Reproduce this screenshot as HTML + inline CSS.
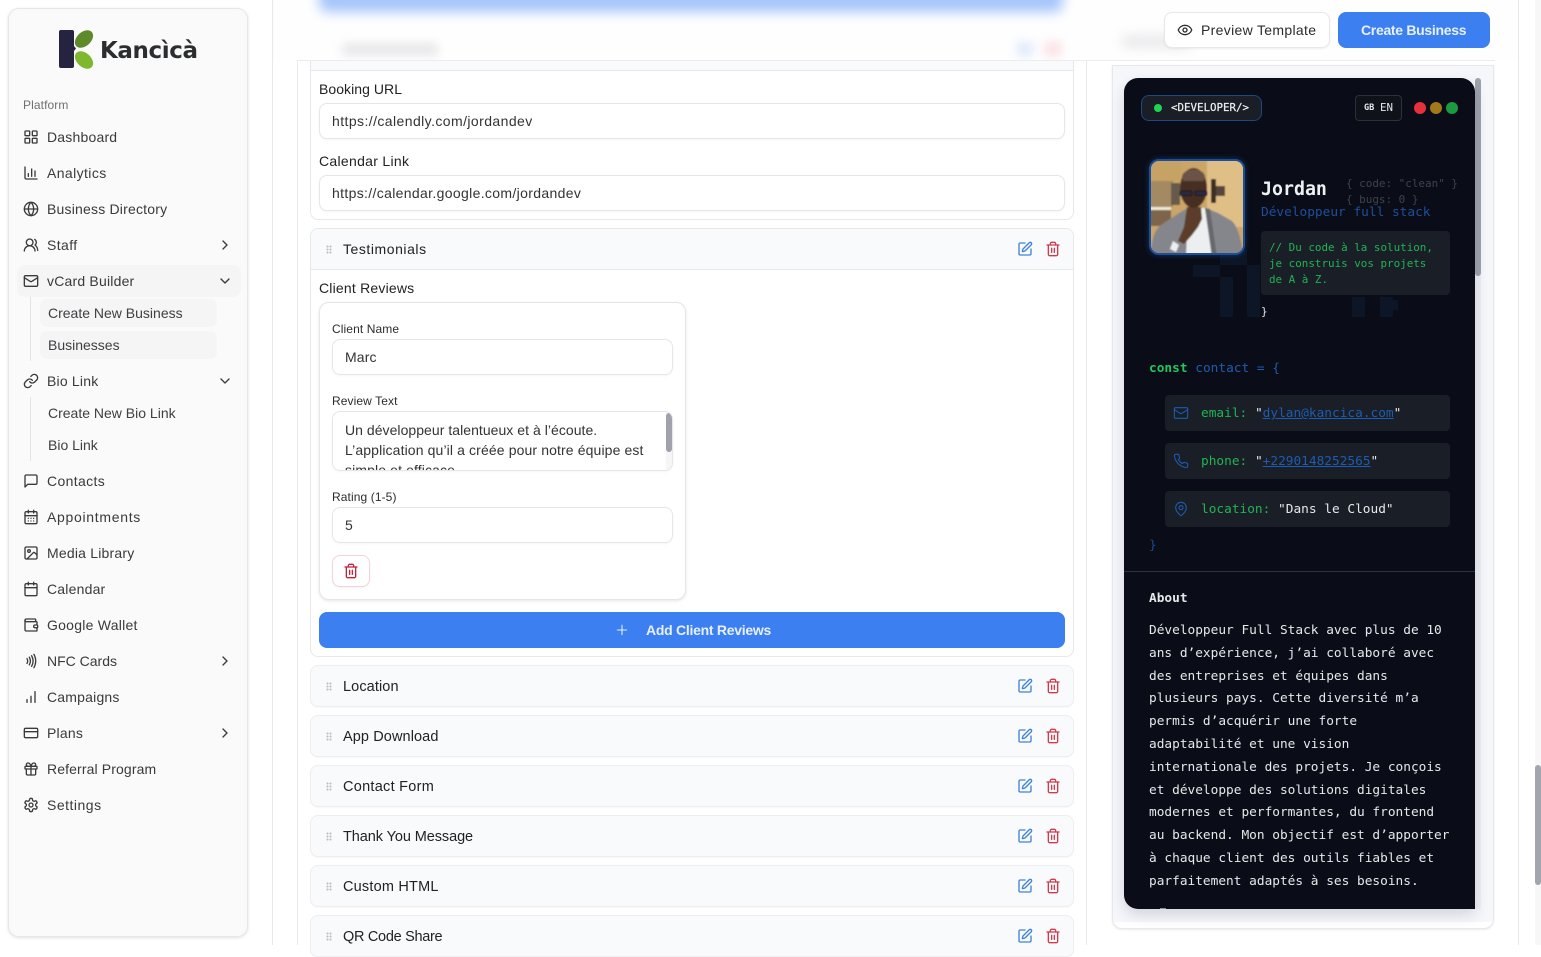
<!DOCTYPE html>
<html lang="en"><head><meta charset="utf-8"><title>Kancìcà - vCard Builder</title>
<style>
*{box-sizing:border-box}
html,body{margin:0;padding:0;width:1541px;height:945px;overflow:hidden;background:#fff;font-family:"Liberation Sans",sans-serif;color:#2c2c2e}
.a{position:absolute}
.t{position:absolute;white-space:nowrap;line-height:20px;height:20px}
.n{font-size:14px;color:#3a3a3c;left:47px;letter-spacing:.2px}
.s{font-size:14px;color:#3f3f42;left:48px;letter-spacing:0}
svg.i{position:absolute;fill:none;stroke:currentColor;stroke-width:2;stroke-linecap:round;stroke-linejoin:round}
.nv{color:#3a3a3c}
.l{font-size:14px;color:#222;letter-spacing:.12px}
.ls{font-size:12px;color:#2c2c2e;letter-spacing:.1px}
.inp{position:absolute;background:#fff;border:1px solid #e6e6e8;border-radius:8px;box-shadow:0 1px 2px rgba(0,0,0,.04)}
.v{font-size:14px;color:#333;letter-spacing:.12px}
.row{position:absolute;left:310px;width:764px;height:42px;background:#f9fafb;border:1px solid #eeeef0;border-radius:8px;box-shadow:0 1px 1px rgba(0,0,0,.03)}
.rt{font-size:14.5px;color:#222;left:343px;letter-spacing:.1px}
.m{font-family:"DejaVu Sans Mono","Liberation Mono",monospace}
.grip{position:absolute;width:6px;height:9px;left:326px;background-image:radial-gradient(circle,#bcbec2 1px,transparent 1.1px);background-size:3px 3px}
.cl{position:absolute;left:25px;font-size:12.8px;line-height:22.8px;color:#e6e8ea;white-space:nowrap}
.box{position:absolute;left:41px;width:285px;height:36px;background:#1a1e27;border-radius:4px}
.blue{color:#1d5cb0}
.gr{color:#1fb552}
</style></head><body>
<svg width="0" height="0" style="position:absolute"><defs>
<symbol id="edit" viewBox="0 0 24 24"><path d="M12 3H5a2 2 0 0 0-2 2v14a2 2 0 0 0 2 2h14a2 2 0 0 0 2-2v-7"/><path d="M18.375 2.625a1 1 0 0 1 3 3l-9.013 9.014a2 2 0 0 1-.853.505l-2.873.84a.5.5 0 0 1-.62-.62l.84-2.873a2 2 0 0 1 .506-.852z"/></symbol>
<symbol id="trash" viewBox="0 0 24 24"><path d="M3 6h18"/><path d="M19 6v14c0 1-1 2-2 2H7c-1 0-2-1-2-2V6"/><path d="M8 6V4c0-1 1-2 2-2h4c1 0 2 1 2 2v2"/><path d="M10 11v6"/><path d="M14 11v6"/></symbol>
<symbol id="mail" viewBox="0 0 24 24"><rect x="2" y="4" width="20" height="16" rx="2"/><path d="m22 7-8.97 5.7a1.94 1.94 0 0 1-2.06 0L2 7"/></symbol>
<symbol id="right" viewBox="0 0 24 24"><path d="m9 18 6-6-6-6"/></symbol>
<symbol id="down" viewBox="0 0 24 24"><path d="m6 9 6 6 6-6"/></symbol>
</defs></svg>

<!-- page rules -->
<div class="a" style="left:272px;top:0;width:1px;height:945px;background:#e8e8ea"></div>
<div class="a" style="left:1518px;top:0;width:1px;height:945px;background:#e8e8ea"></div>
<div class="a" style="left:1535px;top:0;width:6px;height:945px;background:#f7f7f8"></div>
<div class="a" style="left:1535px;top:765px;width:6px;height:120px;background:#a2a4ae;border-radius:3px"></div>

<!-- sidebar -->
<div class="a" style="left:8px;top:8px;width:240px;height:929px;background:#fafafa;border:1px solid #e7e7e7;border-radius:11px;box-shadow:0 1px 3px rgba(0,0,0,.12)"></div>
<svg class="a" style="left:58px;top:29px" width="37" height="40" viewBox="58 29 37 40">
<path d="M61 30h11a2 2 0 0 1 2 2v14l2 2.500-2 2.500v15a2 2 0 0 1-2 2H61a2 2 0 0 1-2-2V32a2 2 0 0 1 2-2z" fill="#25233f"/>
<ellipse cx="84" cy="39" rx="10.500" ry="7" transform="rotate(-42 84 39)" fill="#5f8a2a"/>
<ellipse cx="84" cy="60" rx="10.500" ry="7" transform="rotate(42 84 60)" fill="#7fb82e"/>
</svg>
<div class="t" style="left:100px;top:38.500px;height:24px;line-height:24px;font-family:'DejaVu Sans',sans-serif;font-size:23px;font-weight:bold;color:#2b2d2f;letter-spacing:-.4px">Kancìcà</div>
<div class="t" style="left:23px;top:95px;font-size:12px;color:#6f6f73;letter-spacing:.1px">Platform</div>

<div class="a" style="left:17px;top:265px;width:224px;height:32px;background:#f5f5f6;border-radius:8px"></div>
<div class="a" style="left:30px;top:297px;width:1px;height:64px;background:#e4e4e6"></div>
<div class="a" style="left:40px;top:299px;width:177px;height:28px;background:#f5f5f6;border-radius:7px"></div>
<div class="a" style="left:40px;top:331px;width:177px;height:28px;background:#f5f5f6;border-radius:7px"></div>
<div class="a" style="left:30px;top:397px;width:1px;height:64px;background:#e4e4e6"></div>

<div class="t n" style="top:127px">Dashboard</div>
<div class="t n" style="top:163px;letter-spacing:.4px">Analytics</div>
<div class="t n" style="top:199px">Business Directory</div>
<div class="t n" style="top:235px;letter-spacing:.4px">Staff</div>
<div class="t n" style="top:271px">vCard Builder</div>
<div class="t s" style="top:303px">Create New Business</div>
<div class="t s" style="top:335px">Businesses</div>
<div class="t n" style="top:371px">Bio Link</div>
<div class="t s" style="top:403px">Create New Bio Link</div>
<div class="t s" style="top:435px">Bio Link</div>
<div class="t n" style="top:471px;letter-spacing:.35px">Contacts</div>
<div class="t n" style="top:507px;letter-spacing:.7px">Appointments</div>
<div class="t n" style="top:543px">Media Library</div>
<div class="t n" style="top:579px">Calendar</div>
<div class="t n" style="top:615px;letter-spacing:.25px">Google Wallet</div>
<div class="t n" style="top:651px;letter-spacing:0">NFC Cards</div>
<div class="t n" style="top:687px">Campaigns</div>
<div class="t n" style="top:723px">Plans</div>
<div class="t n" style="top:759px;letter-spacing:.12px">Referral Program</div>
<div class="t n" style="top:795px;letter-spacing:.5px">Settings</div>

<svg class="i nv" style="left:23px;top:129px" width="16" height="16" viewBox="0 0 24 24"><rect x="3" y="3" width="7" height="7" rx="1"/><rect x="14" y="3" width="7" height="7" rx="1"/><rect x="14" y="14" width="7" height="7" rx="1"/><rect x="3" y="14" width="7" height="7" rx="1"/></svg>
<svg class="i nv" style="left:23px;top:165px" width="16" height="16" viewBox="0 0 24 24"><path d="M3 3v16a2 2 0 0 0 2 2h16"/><path d="M8 17v-4"/><path d="M13 17V6"/><path d="M18 17V9"/></svg>
<svg class="i nv" style="left:23px;top:201px" width="16" height="16" viewBox="0 0 24 24"><circle cx="12" cy="12" r="10"/><path d="M12 2a14.5 14.5 0 0 0 0 20 14.5 14.5 0 0 0 0-20"/><path d="M2 12h20"/></svg>
<svg class="i nv" style="left:23px;top:237px" width="16" height="16" viewBox="0 0 24 24"><path d="M18 21a8 8 0 0 0-16 0"/><circle cx="10" cy="8" r="5"/><path d="M22 20c0-3.37-2-6.5-4-8a5 5 0 0 0-.45-8.3"/></svg>
<svg class="i nv" style="left:23px;top:273px" width="16" height="16"><use href="#mail"/></svg>
<svg class="i nv" style="left:23px;top:373px" width="16" height="16" viewBox="0 0 24 24"><path d="M10 13a5 5 0 0 0 7.54.54l3-3a5 5 0 0 0-7.07-7.07l-1.72 1.71"/><path d="M14 11a5 5 0 0 0-7.54-.54l-3 3a5 5 0 0 0 7.07 7.07l1.71-1.71"/></svg>
<svg class="i nv" style="left:23px;top:473px" width="16" height="16" viewBox="0 0 24 24"><path d="M21 15a2 2 0 0 1-2 2H7l-4 4V5a2 2 0 0 1 2-2h14a2 2 0 0 1 2 2z"/></svg>
<svg class="i nv" style="left:23px;top:509px" width="16" height="16" viewBox="0 0 24 24"><path d="M8 2v4"/><path d="M16 2v4"/><rect x="3" y="4" width="18" height="18" rx="2"/><path d="M3 10h18"/><path d="M8 14h.01M12 14h.01M16 14h.01M8 18h.01M12 18h.01M16 18h.01"/></svg>
<svg class="i nv" style="left:23px;top:545px" width="16" height="16" viewBox="0 0 24 24"><rect x="3" y="3" width="18" height="18" rx="2"/><circle cx="9" cy="9" r="2"/><path d="m21 15-3.086-3.086a2 2 0 0 0-2.828 0L6 21"/></svg>
<svg class="i nv" style="left:23px;top:581px" width="16" height="16" viewBox="0 0 24 24"><path d="M8 2v4"/><path d="M16 2v4"/><rect x="3" y="4" width="18" height="18" rx="2"/><path d="M3 10h18"/></svg>
<svg class="i nv" style="left:23px;top:617px" width="16" height="16" viewBox="0 0 24 24"><path d="M19 7V4a1 1 0 0 0-1-1H5a2 2 0 0 0 0 4h15a1 1 0 0 1 1 1v4h-3a2 2 0 0 0 0 4h3a1 1 0 0 0 1-1v-2a1 1 0 0 0-1-1"/><path d="M3 5v14a2 2 0 0 0 2 2h15a1 1 0 0 0 1-1v-4"/></svg>
<svg class="i nv" style="left:23px;top:653px" width="16" height="16" viewBox="0 0 24 24"><path d="M6 8.32a7.43 7.43 0 0 1 0 7.36"/><path d="M9.46 6.21a11.76 11.76 0 0 1 0 11.58"/><path d="M12.91 4.1a15.91 15.91 0 0 1 .01 15.8"/><path d="M16.37 2a20.16 20.16 0 0 1 0 20"/></svg>
<svg class="i nv" style="left:23px;top:689px" width="16" height="16" viewBox="0 0 24 24"><path d="M6 20v-4"/><path d="M12 20v-9"/><path d="M18 20V4"/></svg>
<svg class="i nv" style="left:23px;top:725px" width="16" height="16" viewBox="0 0 24 24"><rect x="2" y="5" width="20" height="14" rx="2"/><path d="M2 10h20"/></svg>
<svg class="i nv" style="left:23px;top:761px" width="16" height="16" viewBox="0 0 24 24"><rect x="3" y="8" width="18" height="4" rx="1"/><path d="M12 8v13"/><path d="M19 12v7a2 2 0 0 1-2 2H7a2 2 0 0 1-2-2v-7"/><path d="M7.5 8a2.5 2.5 0 0 1 0-5A4.8 8 0 0 1 12 8a4.8 8 0 0 1 4.5-5 2.5 2.5 0 0 1 0 5"/></svg>
<svg class="i nv" style="left:23px;top:797px" width="16" height="16" viewBox="0 0 24 24"><path d="M12.22 2h-.44a2 2 0 0 0-2 2v.18a2 2 0 0 1-1 1.73l-.43.25a2 2 0 0 1-2 0l-.15-.08a2 2 0 0 0-2.73.73l-.22.38a2 2 0 0 0 .73 2.73l.15.1a2 2 0 0 1 1 1.72v.51a2 2 0 0 1-1 1.74l-.15.09a2 2 0 0 0-.73 2.73l.22.38a2 2 0 0 0 2.73.73l.15-.08a2 2 0 0 1 2 0l.43.25a2 2 0 0 1 1 1.73V20a2 2 0 0 0 2 2h.44a2 2 0 0 0 2-2v-.18a2 2 0 0 1 1-1.73l.43-.25a2 2 0 0 1 2 0l.15.08a2 2 0 0 0 2.73-.73l.22-.39a2 2 0 0 0-.73-2.73l-.15-.08a2 2 0 0 1-1-1.74v-.5a2 2 0 0 1 1-1.74l.15-.09a2 2 0 0 0 .73-2.73l-.22-.38a2 2 0 0 0-2.73-.73l-.15.08a2 2 0 0 1-2 0l-.43-.25a2 2 0 0 1-1-1.73V4a2 2 0 0 0-2-2z"/><circle cx="12" cy="12" r="3"/></svg>
<svg class="i nv" style="left:217px;top:237px" width="16" height="16"><use href="#right"/></svg>
<svg class="i nv" style="left:217px;top:273px" width="16" height="16"><use href="#down"/></svg>
<svg class="i nv" style="left:217px;top:373px" width="16" height="16"><use href="#down"/></svg>
<svg class="i nv" style="left:217px;top:653px" width="16" height="16"><use href="#right"/></svg>
<svg class="i nv" style="left:217px;top:725px" width="16" height="16"><use href="#right"/></svg>

<!-- editor panel -->
<div class="a" style="left:297px;top:60px;width:790px;height:885px;border-left:1px solid #eaeaec;border-right:1px solid #eaeaec"></div>

<!-- booking card -->
<div class="a" style="left:310px;top:60px;width:764px;height:160px;background:#fff;border:1px solid #e8e8ea;border-top:0;border-radius:0 0 8px 8px"></div>
<div class="a" style="left:311px;top:60px;width:762px;height:11px;background:#f8fafc;border-bottom:1px solid #e8e8ea"></div>
<div class="t l" style="left:319px;top:79px;letter-spacing:.05px">Booking URL</div>
<div class="inp" style="left:319px;top:103px;width:746px;height:36px"></div>
<div class="t v" style="left:332px;top:111px;letter-spacing:.42px">https://calendly.com/jordandev</div>
<div class="t l" style="left:319px;top:151px;letter-spacing:.3px">Calendar Link</div>
<div class="inp" style="left:319px;top:175px;width:746px;height:36px"></div>
<div class="t v" style="left:332px;top:183px;letter-spacing:.34px">https://calendar.google.com/jordandev</div>

<!-- testimonials card -->
<div class="a" style="left:310px;top:228px;width:764px;height:429px;background:#fff;border:1px solid #e8e8ea;border-radius:8px"></div>
<div class="a" style="left:311px;top:229px;width:762px;height:41px;background:#f8fafc;border-bottom:1px solid #e8e8ea;border-radius:7px 7px 0 0"></div>
<div class="grip" style="top:245px"></div>
<div class="t rt" style="top:239px;font-size:14px;letter-spacing:.55px">Testimonials</div>
<svg class="i" style="left:1017px;top:241px;color:#3f83d8" width="16" height="16"><use href="#edit"/></svg>
<svg class="i" style="left:1045px;top:241px;color:#d23a4c" width="16" height="16"><use href="#trash"/></svg>
<div class="t l" style="left:319px;top:278px;letter-spacing:.2px">Client Reviews</div>

<div class="a" style="left:319px;top:302px;width:367px;height:298px;background:#fff;border:1px solid #e6e6e8;border-radius:10px;box-shadow:0 1px 3px rgba(0,0,0,.1)"></div>
<div class="t ls" style="left:332px;top:319px">Client Name</div>
<div class="inp" style="left:332px;top:339px;width:341px;height:36px"></div>
<div class="t v" style="left:345px;top:347px">Marc</div>
<div class="t ls" style="left:332px;top:391px">Review Text</div>
<div class="inp" style="left:332px;top:411px;width:341px;height:60px;overflow:hidden">
<div class="t v" style="left:12px;top:8px;letter-spacing:.04px">Un développeur talentueux et à l’écoute.</div>
<div class="t v" style="left:12px;top:28px">L’application qu’il a créée pour notre équipe est</div>
<div class="t v" style="left:12px;top:48px">simple et efficace.</div>
<div class="a" style="left:333px;top:0;width:7px;height:60px;background:#f6f6f8"></div>
<div class="a" style="left:333px;top:1px;width:6px;height:39px;background:#9fa1ab;border-radius:3px"></div>
</div>
<div class="t ls" style="left:332px;top:487px">Rating (1-5)</div>
<div class="inp" style="left:332px;top:507px;width:341px;height:36px"></div>
<div class="t v" style="left:345px;top:515px">5</div>
<div class="a" style="left:332px;top:555px;width:38px;height:32px;background:#fff;border:1px solid #f3d4d8;border-radius:8px;box-shadow:0 1px 2px rgba(0,0,0,.05)"></div>
<svg class="i" style="left:343px;top:563px;color:#c81e3a" width="16" height="16"><use href="#trash"/></svg>

<div class="a" style="left:319px;top:612px;width:746px;height:36px;background:#3b7ff0;border-radius:8px"></div>
<svg class="i" style="left:614px;top:622px;color:#e6effd;stroke-width:1.6" width="16" height="16" viewBox="0 0 24 24"><path d="M5 12h14"/><path d="M12 5v14"/></svg>
<div class="t" style="left:646px;top:620px;font-size:14px;font-weight:bold;color:#e8f0fe;letter-spacing:-.27px">Add Client Reviews</div>

<!-- collapsed rows -->
<div class="row" style="top:665px"></div><div class="grip" style="top:682px"></div><div class="t rt" style="top:677px">Location</div>
<svg class="i" style="left:1017px;top:678px;color:#3f83d8" width="16" height="16"><use href="#edit"/></svg><svg class="i" style="left:1045px;top:678px;color:#d23a4c" width="16" height="16"><use href="#trash"/></svg>
<div class="row" style="top:715px"></div><div class="grip" style="top:732px"></div><div class="t rt" style="top:727px">App Download</div>
<svg class="i" style="left:1017px;top:728px;color:#3f83d8" width="16" height="16"><use href="#edit"/></svg><svg class="i" style="left:1045px;top:728px;color:#d23a4c" width="16" height="16"><use href="#trash"/></svg>
<div class="row" style="top:765px"></div><div class="grip" style="top:782px"></div><div class="t rt" style="top:777px;letter-spacing:.27px">Contact Form</div>
<svg class="i" style="left:1017px;top:778px;color:#3f83d8" width="16" height="16"><use href="#edit"/></svg><svg class="i" style="left:1045px;top:778px;color:#d23a4c" width="16" height="16"><use href="#trash"/></svg>
<div class="row" style="top:815px"></div><div class="grip" style="top:832px"></div><div class="t rt" style="top:827px;letter-spacing:-.08px">Thank You Message</div>
<svg class="i" style="left:1017px;top:828px;color:#3f83d8" width="16" height="16"><use href="#edit"/></svg><svg class="i" style="left:1045px;top:828px;color:#d23a4c" width="16" height="16"><use href="#trash"/></svg>
<div class="row" style="top:865px"></div><div class="grip" style="top:882px"></div><div class="t rt" style="top:877px;letter-spacing:.2px">Custom HTML</div>
<svg class="i" style="left:1017px;top:878px;color:#3f83d8" width="16" height="16"><use href="#edit"/></svg><svg class="i" style="left:1045px;top:878px;color:#d23a4c" width="16" height="16"><use href="#trash"/></svg>
<div class="row" style="top:915px"></div><div class="grip" style="top:932px"></div><div class="t rt" style="top:927px;letter-spacing:-.3px">QR Code Share</div>
<svg class="i" style="left:1017px;top:928px;color:#3f83d8" width="16" height="16"><use href="#edit"/></svg><svg class="i" style="left:1045px;top:928px;color:#d23a4c" width="16" height="16"><use href="#trash"/></svg>

<!-- blurred sticky header -->
<div class="a" style="left:273px;top:0;width:1245px;height:60px;background:#fefefe;overflow:hidden">
<div class="a" style="left:46px;top:-24px;width:744px;height:36px;background:#a5c5fa;border-radius:8px;filter:blur(6px)"></div>
<div class="a" style="left:69px;top:44px;width:96px;height:11px;background:#e4e4e6;border-radius:5px;filter:blur(5px)"></div>
<div class="a" style="left:744px;top:42px;width:16px;height:14px;background:#dfe9fb;filter:blur(5px)"></div>
<div class="a" style="left:772px;top:42px;width:16px;height:14px;background:#f9dfe2;filter:blur(5px)"></div>
<div class="a" style="left:849px;top:36px;width:70px;height:11px;background:#e6e6e8;border-radius:5px;filter:blur(6px)"></div>
</div>
<div class="a" style="left:297px;top:60px;width:1198px;height:1px;background:#ececee"></div>
<div class="a" style="left:1164px;top:12px;width:166px;height:36px;background:#fff;border:1px solid #e8e8ea;border-radius:8px;box-shadow:0 1px 2px rgba(0,0,0,.06)"></div>
<svg class="i" style="left:1177px;top:22px;color:#2c2c2e" width="16" height="16" viewBox="0 0 24 24"><path d="M2.062 12.348a1 1 0 0 1 0-.696 10.75 10.75 0 0 1 19.876 0 1 1 0 0 1 0 .696 10.75 10.75 0 0 1-19.876 0"/><circle cx="12" cy="12" r="3"/></svg>
<div class="t" style="left:1201px;top:20px;font-size:14px;color:#2c2c2e;letter-spacing:.32px">Preview Template</div>
<div class="a" style="left:1338px;top:12px;width:152px;height:36px;background:#3b7ff0;border-radius:8px"></div>
<div class="t" style="left:1361px;top:20px;font-size:14px;font-weight:bold;color:#e8f0fe;letter-spacing:-.3px">Create Business</div>

<!-- preview panel -->
<div class="a" style="left:1112px;top:65px;width:382px;height:864px;background:#fff;border:1px solid #e8e8ea;border-radius:0 0 10px 10px;box-shadow:0 1px 2px rgba(0,0,0,.08);overflow:hidden">
<div class="a" style="left:0;top:0;width:380px;height:856px;background:#f6f7fb"></div>
</div>
<div class="a" style="left:1475px;top:78px;width:6px;height:831px;background:#eef0f4"></div>
<div class="a" style="left:1475px;top:78px;width:6px;height:198px;background:#9ea3ad;border-radius:3px"></div>

<div class="a m" style="left:1124px;top:78px;width:351px;height:831px;background:#0a0d17;border-radius:14px 14px 0 14px;overflow:hidden;box-shadow:0 6px 14px rgba(30,40,70,.16)">
  <!-- pixel art -->
  <div class="a" style="left:69px;top:187px;width:27px;height:12px;background:#0c1626"></div>
  <div class="a" style="left:96px;top:172px;width:27px;height:15px;background:#0c1626"></div>
  <div class="a" style="left:123px;top:187px;width:13px;height:12px;background:#0c1626"></div>
  <div class="a" style="left:96px;top:199px;width:13px;height:40px;background:#0c1626"></div>
  <div class="a" style="left:123px;top:199px;width:13px;height:40px;background:#0c1626"></div>
  <div class="a" style="left:228px;top:219px;width:13px;height:20px;background:#0c1626"></div>
  <div class="a" style="left:256px;top:219px;width:13px;height:20px;background:#0c1626"></div>
  <div class="a" style="left:269px;top:222px;width:5px;height:10px;background:#0c1626"></div>

  <!-- head bar -->
  <div class="a" style="left:17px;top:17px;width:121px;height:26px;background:#1a1e27;border:1px solid #1d4880;border-radius:8px"></div>
  <div class="a" style="left:30px;top:26px;width:8px;height:8px;border-radius:50%;background:#1ed552"></div>
  <div class="t" style="left:47px;top:20px;font-size:10.8px;color:#eef0f2;-webkit-text-stroke:.2px #eef0f2">&lt;DEVELOPER/&gt;</div>
  <div class="a" style="left:231px;top:17px;width:47px;height:26px;background:#0f1219;border:1px solid #2c3038;border-radius:4px"></div>
  <div class="t" style="left:240px;top:20px;font-size:8.5px;font-weight:bold;color:#e6e8ea">GB</div>
  <div class="t" style="left:256px;top:20px;font-size:10.8px;color:#e6e8ea">EN</div>
  <div class="a" style="left:290px;top:24px;width:12px;height:12px;border-radius:50%;background:#e6303c"></div>
  <div class="a" style="left:306px;top:24px;width:12px;height:12px;border-radius:50%;background:#a3781a"></div>
  <div class="a" style="left:322px;top:24px;width:12px;height:12px;border-radius:50%;background:#1b9a3e"></div>

  <!-- photo -->
  <div class="a" style="left:25px;top:81px;width:96px;height:96px;border:2px solid #1d4f99;border-radius:10px;overflow:hidden;box-shadow:0 0 6px rgba(30,90,180,.5);background:#c9a76d">
  <svg width="92" height="92" viewBox="0 0 92 92" style="display:block">
    <defs><filter id="b" x="-10%" y="-10%" width="120%" height="120%"><feGaussianBlur stdDeviation=".9"/></filter></defs>
    <g filter="url(#b)">
    <rect x="-4" y="-4" width="100" height="100" fill="#cba567"/>
    <rect x="56" y="-4" width="40" height="70" fill="#e0bf87"/>
    <rect x="-4" y="-4" width="34" height="24" fill="#c7a265"/>
    <rect x="-4" y="20" width="26" height="26" fill="#a48a62"/>
    <rect x="-4" y="46" width="24" height="3" fill="#efe8d6"/>
    <rect x="-4" y="49" width="24" height="16" fill="#7d654c"/>
    <rect x="20" y="22" width="9" height="22" fill="#665a4b"/>
    <rect x="60" y="18" width="5" height="24" fill="#3a2e24"/><rect x="65" y="25" width="9" height="10" fill="#54453a"/>
    <path d="M0 96c0-14 2-26 10-32l18-12 9-5h18l12 5 14 8c6 6 10 20 11 36z" fill="#85868b"/>
    <path d="M37 47h17l7 49H35z" fill="#eceef0"/>
    <path d="M54 47l5 1 7 48h-5z" fill="#66676c"/>
    <path d="M27 80l6-14 3-20h14l1 12-4 8-6 8-8 9z" fill="#5c3d2c"/>
    <path d="M22 80l6 4-3 7-6-3z" fill="#eeeeee"/>
    <ellipse cx="42.500" cy="27" rx="13.500" ry="20" fill="#472d21"/>
    <path d="M31 15c3-9 20-9 23 0l-1 5H32z" fill="#6a5346"/>
    <rect x="29" y="30" width="12" height="4.500" rx="1.500" fill="#2a2a44" stroke="#12121e" stroke-width="1"/><rect x="44" y="30" width="12" height="4.500" rx="1.500" fill="#2a2a44" stroke="#12121e" stroke-width="1"/>
    </g>
  </svg>
  </div>

  <!-- name -->
  <div class="t" style="left:137px;top:102px;font-size:18.25px;font-weight:bold;color:#eef0f2">Jordan</div>
  <div class="t" style="left:222px;top:96px;font-size:10.95px;color:#3e434b">{ code: "clean" }</div>
  <div class="t" style="left:222px;top:112px;font-size:10.95px;color:#3e434b">{ bugs: 0 }</div>
  <div class="t" style="left:137px;top:125px;font-size:12.8px;color:#1c4f9c">Développeur full stack</div>
  <div class="a" style="left:137px;top:153px;width:189px;height:64px;background:#1a1e27;border-radius:4px"></div>
  <div class="t gr" style="left:145px;top:160px;font-size:10.9px">// Du code à la solution,</div>
  <div class="t gr" style="left:145px;top:176px;font-size:10.9px">je construis vos projets</div>
  <div class="t gr" style="left:145px;top:192px;font-size:10.9px">de A à Z.</div>
  <div class="t" style="left:137px;top:224px;font-size:11px;color:#e6e8ea">}</div>

  <!-- contact -->
  <div class="t" style="left:25px;top:281px;font-size:12.8px"><b class="gr" style="color:#22c55e">const</b> <span class="blue">contact = {</span></div>
  <div class="box" style="top:317px"></div>
  <svg class="i blue" style="left:49px;top:327px;stroke-width:1.6" width="16" height="16"><use href="#mail"/></svg>
  <div class="t" style="left:77px;top:326px;font-size:12.8px;color:#e6e8ea"><span class="gr">email:</span> "<span class="blue" style="text-decoration:underline">dylan@kancica.com</span>"</div>
  <div class="box" style="top:365px"></div>
  <svg class="i blue" style="left:49px;top:375px;stroke-width:1.6" width="16" height="16" viewBox="0 0 24 24"><path d="M22 16.92v3a2 2 0 0 1-2.18 2 19.79 19.79 0 0 1-8.63-3.07 19.5 19.5 0 0 1-6-6 19.79 19.79 0 0 1-3.07-8.67A2 2 0 0 1 4.11 2h3a2 2 0 0 1 2 1.72 12.84 12.84 0 0 0 .7 2.81 2 2 0 0 1-.45 2.11L8.09 9.91a16 16 0 0 0 6 6l1.27-1.27a2 2 0 0 1 2.11-.45 12.84 12.84 0 0 0 2.81.7A2 2 0 0 1 22 16.92z"/></svg>
  <div class="t" style="left:77px;top:374px;font-size:12.8px;color:#e6e8ea"><span class="gr">phone:</span> "<span class="blue" style="text-decoration:underline">+2290148252565</span>"</div>
  <div class="box" style="top:413px"></div>
  <svg class="i blue" style="left:49px;top:423px;stroke-width:1.6" width="16" height="16" viewBox="0 0 24 24"><path d="M20 10c0 4.993-5.539 10.193-7.399 11.799a1 1 0 0 1-1.202 0C9.539 20.193 4 14.993 4 10a8 8 0 0 1 16 0"/><circle cx="12" cy="10" r="3"/></svg>
  <div class="t" style="left:77px;top:422px;font-size:12.8px;color:#e6e8ea"><span class="gr">location:</span> "Dans le Cloud"</div>
  <div class="t" style="left:25px;top:458px;font-size:12.8px;color:#1a4a90">}</div>
  <div class="a" style="left:0;top:493px;width:351px;height:1px;background:#2a3444"></div>

  <!-- about -->
  <div class="t" style="left:25px;top:511px;font-size:12.8px;font-weight:bold;color:#e6e8ea">About</div>
  <div class="cl" style="top:542px">Développeur Full Stack avec plus de 10<br>ans d’expérience, j’ai collaboré avec<br>des entreprises et équipes dans<br>plusieurs pays. Cette diversité m’a<br>permis d’acquérir une forte<br>adaptabilité et une vision<br>internationale des projets. Je conçois<br>et développe des solutions digitales<br>modernes et performantes, du frontend<br>au backend. Mon objectif est d’apporter<br>à chaque client des outils fiables et<br>parfaitement adaptés à ses besoins.</div>
  <div class="a" style="left:36px;top:830px;width:6px;height:1px;background:#8c8f96"></div>
</div>
</body></html>
